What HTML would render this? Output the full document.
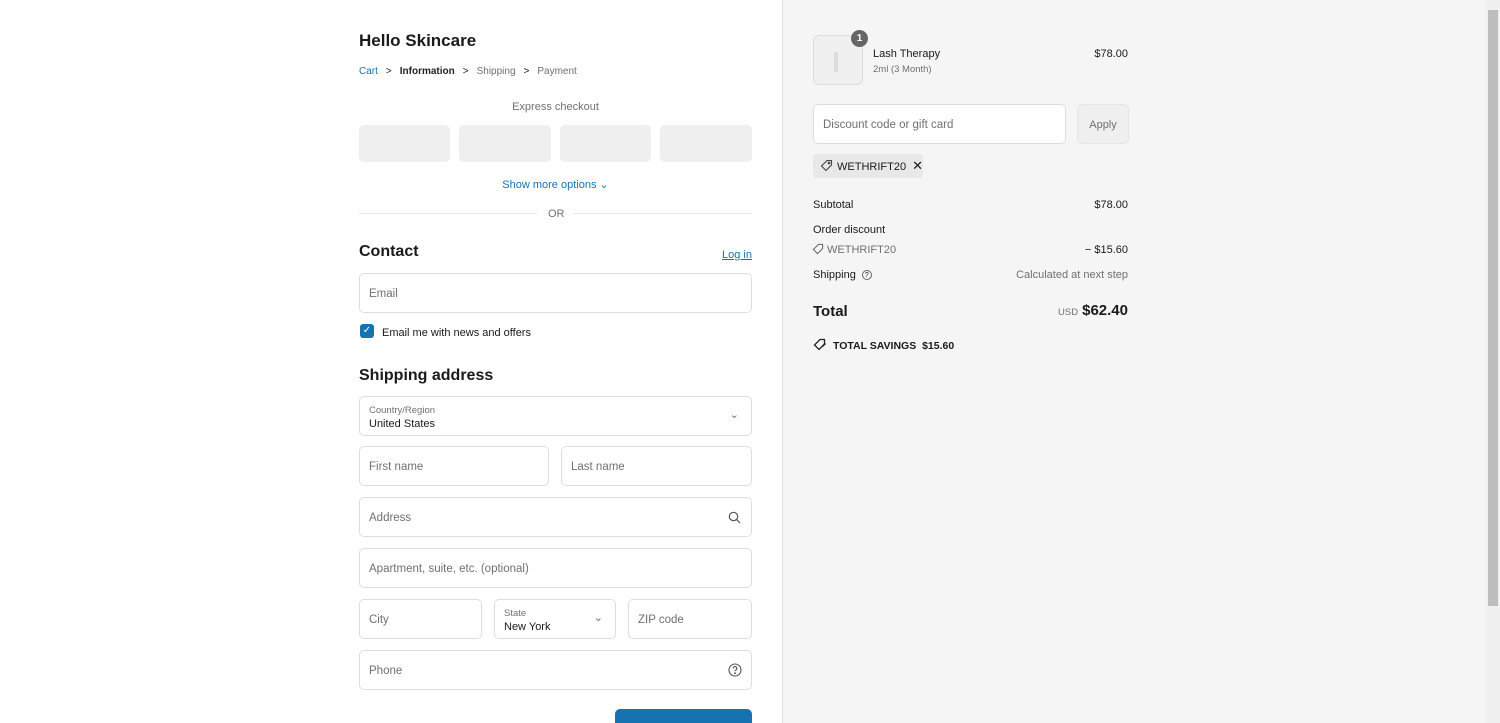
<!DOCTYPE html>
<html><head><style>
*{box-sizing:border-box;margin:0;padding:0}
html{overflow:hidden;width:1500px;height:723px}
body{width:1500px;height:723px;overflow:hidden;font-family:"Liberation Sans",sans-serif;color:#1a1a1a;background:#fff;position:relative;font-size:12px}
.a{position:absolute}
.right{position:absolute;left:782px;top:0;width:705px;height:723px;background:#f5f5f5;border-left:1px solid #e1e1e1}
.inp{position:absolute;border:1px solid #dedede;border-radius:5px;background:#fff;height:40px}
.ph{position:absolute;left:9px;top:14px;color:#707070;font-size:11.5px}
.xb{position:absolute;top:125px;height:37px;background:#efefef;border-radius:5px}
.g{color:#707070}
</style></head><body>
<div class="a" style="left:359px;top:31px;font-size:17px;font-weight:600">Hello Skincare</div>
<div class="a" style="left:359px;top:66px;font-size:10px;white-space:nowrap">
<span style="color:#1773b0">Cart</span><span style="margin:0 8px">&gt;</span><b style="color:#222">Information</b><span style="margin:0 8px">&gt;</span><span class="g">Shipping</span><span style="margin:0 8px">&gt;</span><span class="g">Payment</span></div>
<div class="a g" style="left:359px;width:393px;text-align:center;top:101px;font-size:11px">Express checkout</div>
<div class="xb" style="left:359px;width:91px"></div>
<div class="xb" style="left:459px;width:92px"></div>
<div class="xb" style="left:560px;width:91px"></div>
<div class="xb" style="left:660px;width:92px"></div>
<div class="a" style="left:359px;width:393px;text-align:center;top:178px;font-size:11px;color:#1773b0">Show more options &#8964;</div>
<div class="a" style="left:359px;top:213px;width:178px;border-top:1px solid #e5e5e5"></div>
<div class="a" style="left:574px;top:213px;width:178px;border-top:1px solid #e5e5e5"></div>
<div class="a g" style="left:548px;top:208px;font-size:11px">OR</div>
<div class="a" style="left:359px;top:243px;font-size:16px;font-weight:600">Contact</div>
<div class="a" style="left:722px;top:249px;font-size:11px;color:#1773b0;text-decoration:underline">Log in</div>
<div class="inp" style="left:359px;top:273px;width:393px"><span class="ph">Email</span></div>
<div class="a" style="left:360px;top:324px;width:14px;height:14px;background:#1773b0;border-radius:3px;color:#fff;font-size:10px;text-align:center;line-height:14px">✓</div>
<div class="a" style="left:382px;top:327px;font-size:11px">Email me with news and offers</div>
<div class="a" style="left:359px;top:367px;font-size:16px;font-weight:600">Shipping address</div>
<div class="inp" style="left:359px;top:396px;width:393px"><span class="a g" style="left:9px;top:8px;font-size:9.5px">Country/Region</span><span class="a" style="left:9px;top:21px;font-size:11px">United States</span><span class="a g" style="right:12px;top:11px;font-size:11px">&#8964;</span></div>
<div class="inp" style="left:359px;top:446px;width:190px"><span class="ph">First name</span></div>
<div class="inp" style="left:561px;top:446px;width:191px"><span class="ph">Last name</span></div>
<div class="inp" style="left:359px;top:497px;width:393px"><span class="ph">Address</span>
<svg class="a" style="right:10px;top:13px" width="13" height="13" viewBox="0 0 13 13" fill="none" stroke="#555" stroke-width="1.2"><circle cx="5.5" cy="5.5" r="4.2"/><path d="M8.6 8.6L12 12"/></svg></div>
<div class="inp" style="left:359px;top:548px;width:393px"><span class="ph">Apartment, suite, etc. (optional)</span></div>
<div class="inp" style="left:359px;top:599px;width:123px"><span class="ph">City</span></div>
<div class="inp" style="left:494px;top:599px;width:122px"><span class="a g" style="left:9px;top:8px;font-size:9.5px">State</span><span class="a" style="left:9px;top:21px;font-size:11px">New York</span><span class="a g" style="right:12px;top:11px;font-size:11px">&#8964;</span></div>
<div class="inp" style="left:628px;top:599px;width:124px"><span class="ph">ZIP code</span></div>
<div class="inp" style="left:359px;top:650px;width:393px"><span class="ph">Phone</span>
<svg class="a" style="right:9px;top:12px" width="14" height="14" viewBox="0 0 14 14" fill="none" stroke="#555" stroke-width="1.1"><circle cx="7" cy="7" r="6"/><path d="M5.2 5.5a1.8 1.8 0 1 1 2.4 1.6c-.5.2-.6.6-.6 1.1"/><circle cx="7" cy="10.2" r=".4" fill="#555"/></svg></div>
<div class="a" style="left:615px;top:709px;width:137px;height:14px;background:#1773b0;border-radius:5px 5px 0 0"></div>

<div class="right">
<div class="a" style="left:30px;top:35px;width:50px;height:50px;border:1px solid #ddd;border-radius:6px;background:#f0f0f0"><div class="a" style="left:20px;top:16px;width:4px;height:20px;background:#ddd"></div></div>
<div class="a" style="left:68px;top:30px;width:17px;height:17px;border-radius:50%;background:#666;color:#fff;font-size:10px;font-weight:bold;text-align:center;line-height:17px">1</div>
<div class="a" style="left:90px;top:48px;font-size:11px">Lash Therapy</div>
<div class="a g" style="left:90px;top:64px;font-size:9.5px">2ml (3 Month)</div>
<div class="a" style="right:359px;top:48px;font-size:11px">$78.00</div>
<div class="a" style="left:30px;top:104px;width:253px;height:40px;background:#fff;border:1px solid #ddd;border-radius:5px"><span class="ph">Discount code or gift card</span></div>
<div class="a g" style="left:294px;top:104px;width:52px;height:40px;background:#efefef;border:1px solid #e5e5e5;border-radius:5px;text-align:center;line-height:40px;font-size:11px">Apply</div>
<div class="a" style="left:30px;top:154px;width:110px;height:24px;background:#e8e8e8;border-radius:4px;font-size:11px;line-height:24px;padding-left:24px;white-space:nowrap">WETHRIFT20<span style="margin-left:6px;font-size:13px">✕</span>
<svg class="a" style="left:7px;top:5px" width="13" height="13" viewBox="0 0 13 13" fill="none" stroke="#444" stroke-width="1.1"><path d="M7 1.5h4.5V6L6 11.5 1.5 7z"/><circle cx="9" cy="4" r=".8"/></svg></div>
<div class="a" style="left:30px;top:199px;font-size:11px">Subtotal</div><div class="a" style="right:359px;top:199px;font-size:11px">$78.00</div>
<div class="a" style="left:30px;top:224px;font-size:11px">Order discount</div>
<div class="a g" style="left:44px;top:244px;font-size:11px">WETHRIFT20</div>
<svg class="a" style="left:29px;top:243px" width="12" height="12" viewBox="0 0 13 13" fill="none" stroke="#666" stroke-width="1.1"><path d="M7 1.5h4.5V6L6 11.5 1.5 7z"/></svg>
<div class="a" style="right:359px;top:244px;font-size:11px">− $15.60</div>
<div class="a" style="left:30px;top:269px;font-size:11px">Shipping <span style="display:inline-block;width:10px;height:10px;border:1px solid #666;border-radius:50%;font-size:7px;text-align:center;line-height:9px;margin-left:3px;vertical-align:middle">?</span></div>
<div class="a g" style="right:359px;top:269px;font-size:11px">Calculated at next step</div>
<div class="a" style="left:30px;top:303px;font-size:15px;font-weight:600">Total</div>
<div class="a" style="right:359px;top:302px;font-size:15px;font-weight:bold"><span class="g" style="font-size:9.5px;font-weight:normal;margin-right:4px">USD</span>$62.40</div>
<svg class="a" style="left:30px;top:338px" width="14" height="14" viewBox="0 0 14 14" fill="none" stroke="#222" stroke-width="1.3"><path d="M7 1.5h4.5V6L6 11.5 1.5 7z"/><path d="M9.5 8.5 12.5 5.5"/></svg>
<div class="a" style="left:50px;top:340px;font-size:10.5px;font-weight:bold">TOTAL SAVINGS&nbsp;&nbsp;$15.60</div>
</div>
<div class="a" style="left:1486px;top:0;width:14px;height:723px;background:#f0f0f0"></div>
<div class="a" style="left:1488px;top:10px;width:10px;height:596px;background:#bdbdbd"></div>
</body></html>
